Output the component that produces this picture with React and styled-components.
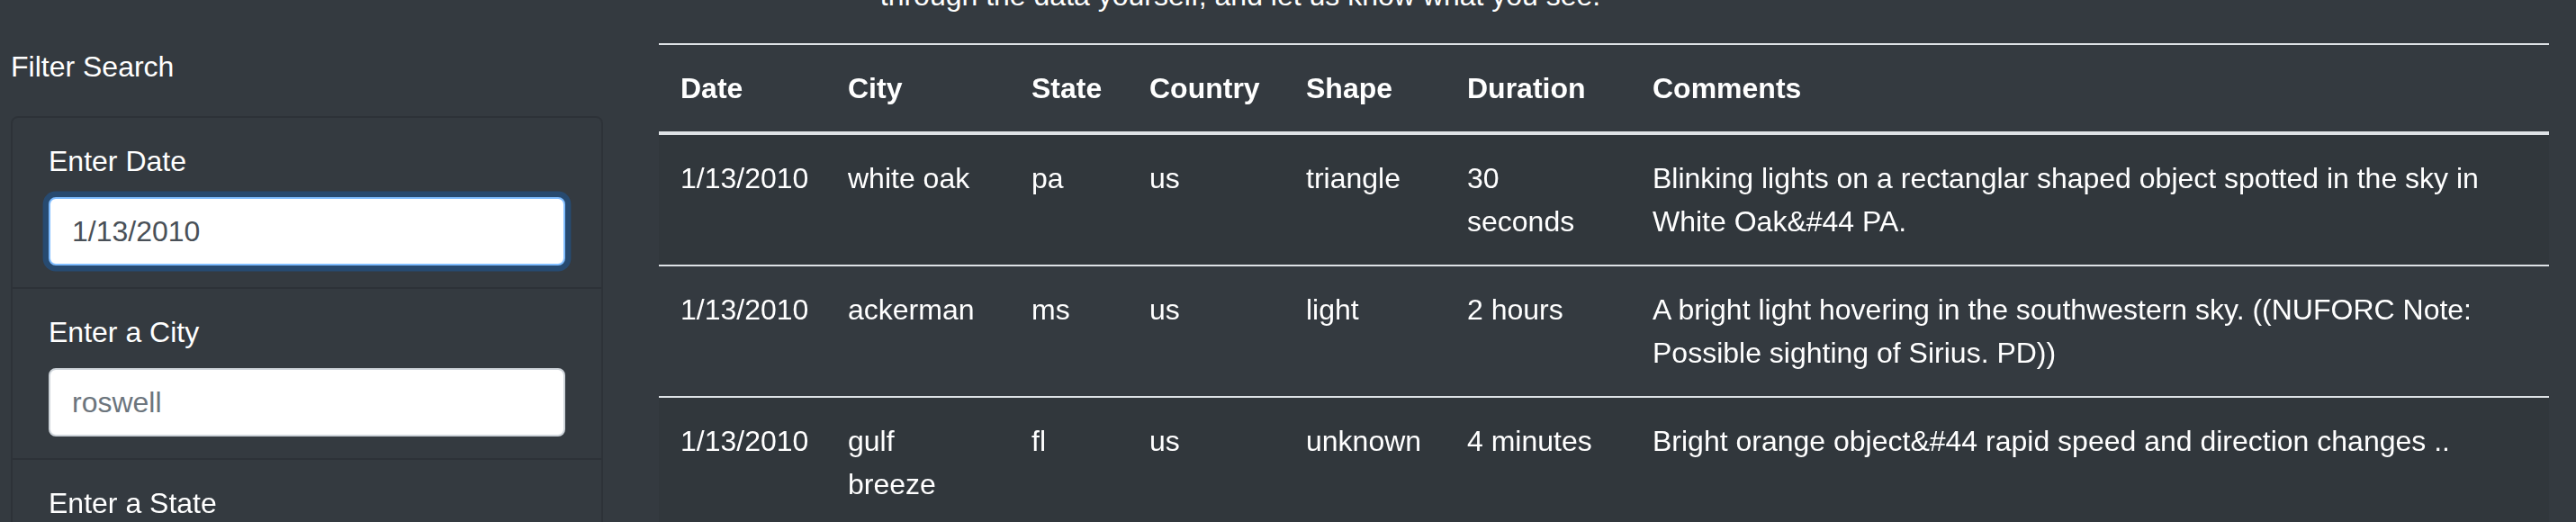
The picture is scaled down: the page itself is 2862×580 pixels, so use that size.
import React, { useEffect, useRef } from 'react';
import styled, { createGlobalStyle } from 'styled-components';

const GlobalStyle = createGlobalStyle`
  * {
    box-sizing: border-box;
  }
  body {
    margin: 0;
    background: #343a40;
    color: #ffffff;
    font-family: "Liberation Sans", Helvetica, Arial, sans-serif;
    font-size: 32px;
    line-height: 1.5;
    overflow: hidden;
  }
`;

const sightings = [
  {
    date: '1/13/2010',
    city: 'white oak',
    state: 'pa',
    country: 'us',
    shape: 'triangle',
    duration: '30 seconds',
    comments: 'Blinking lights on a rectanglar shaped object spotted in the sky in White Oak&#44 PA.',
  },
  {
    date: '1/13/2010',
    city: 'ackerman',
    state: 'ms',
    country: 'us',
    shape: 'light',
    duration: '2 hours',
    comments: 'A bright light hovering in the southwestern sky. ((NUFORC Note: Possible sighting of Sirius. PD))',
  },
  {
    date: '1/13/2010',
    city: 'gulf breeze',
    state: 'fl',
    country: 'us',
    shape: 'unknown',
    duration: '4 minutes',
    comments: 'Bright orange object&#44 rapid speed and direction changes ..',
  },
];

const columns = [
  { key: 'date', label: 'Date', width: 186 },
  { key: 'city', label: 'City', width: 204 },
  { key: 'state', label: 'State', width: 131 },
  { key: 'country', label: 'Country', width: 174 },
  { key: 'shape', label: 'Shape', width: 179 },
  { key: 'duration', label: 'Duration', width: 206 },
  { key: 'comments', label: 'Comments', width: 1020 },
];

const filters = [
  { id: 'datetime', label: 'Enter Date', value: '1/13/2010', focused: true },
  { id: 'city', label: 'Enter a City', placeholder: 'roswell' },
  { id: 'state', label: 'Enter a State', placeholder: 'ca' },
  { id: 'country', label: 'Enter a Country', placeholder: 'us' },
  { id: 'shape', label: 'Enter a Shape', placeholder: 'light' },
];

const App = () => {
  const dateRef = useRef(null);

  useEffect(() => {
    // put the caret at the end of the date, like the user just typed it
    const el = dateRef.current;
    if (el) {
      el.focus();
      el.setSelectionRange(el.value.length, el.value.length);
    }
  }, []);

  return (
    <>
      <GlobalStyle />
      <Intro>through the data yourself, and let us know what you see.</Intro>
      <Row>
        <Sidebar>
          <SidebarTitle>Filter Search</SidebarTitle>
          <FilterList>
            {filters.map((f) => (
              <FilterItem key={f.id}>
                <FilterLabel htmlFor={f.id}>{f.label}</FilterLabel>
                <FilterInput
                  id={f.id}
                  type="text"
                  ref={f.focused ? dateRef : undefined}
                  $focused={f.focused}
                  placeholder={f.placeholder}
                  defaultValue={f.value}
                />
              </FilterItem>
            ))}
          </FilterList>
        </Sidebar>
        <Main>
          <Table>
            <colgroup>
              {columns.map((c) => (
                <col key={c.key} style={{ width: c.width }} />
              ))}
            </colgroup>
            <thead>
              <tr>
                {columns.map((c) => (
                  <Th key={c.key}>{c.label}</Th>
                ))}
              </tr>
            </thead>
            <tbody>
              {sightings.map((s, i) => (
                <Tr key={i}>
                  {columns.map((c) => (
                    <Td key={c.key}>{s[c.key]}</Td>
                  ))}
                </Tr>
              ))}
            </tbody>
          </Table>
        </Main>
      </Row>
    </>
  );
};

export default App;

const Intro = styled.p`
  margin: -29px 0 29px;
  padding-right: 106px;
  text-align: center;
`;

const Row = styled.div`
  display: flex;
  align-items: flex-start;
  padding-left: 12px;
`;

const Sidebar = styled.aside`
  flex: none;
  width: 658px;
  padding-top: 2px;
`;

const SidebarTitle = styled.div`
  margin: 0 0 31px;
`;

const FilterList = styled.ul`
  list-style: none;
  margin: 0;
  padding: 0;
  border: 2px solid rgba(0, 0, 0, 0.125);
  border-radius: 8px;
`;

const FilterItem = styled.li`
  padding: 24px 40px;
  border-bottom: 2px solid rgba(0, 0, 0, 0.125);
  &:last-child {
    border-bottom: none;
  }
`;

const FilterLabel = styled.label`
  display: block;
  margin-bottom: 16px;
`;

const FilterInput = styled.input`
  display: block;
  width: 100%;
  height: 76px;
  padding: 12px 24px;
  font-family: inherit;
  font-size: 32px;
  line-height: 1.5;
  color: #495057;
  caret-color: #212529;
  background: #ffffff;
  border: 2px solid ${(p) => (p.$focused ? '#80bdff' : '#ced4da')};
  border-radius: 8px;
  box-shadow: ${(p) => (p.$focused ? '0 0 0 6.4px rgba(0, 123, 255, 0.25)' : 'none')};
  outline: none;
  &::placeholder {
    color: #6c757d;
  }
`;

const Main = styled.main`
  flex: none;
  width: 2100px;
  margin-left: 62px;
`;

const Table = styled.table`
  width: 100%;
  table-layout: fixed;
  border-collapse: collapse;
  color: #ffffff;
`;

const Th = styled.th`
  padding: 24px;
  text-align: left;
  font-weight: 700;
  vertical-align: bottom;
  border-top: 2px solid #dee2e6;
  border-bottom: 4px solid #dee2e6;
`;

const Tr = styled.tr`
  &:nth-of-type(odd) {
    background: rgba(0, 0, 0, 0.05);
  }
`;

const Td = styled.td`
  padding: 24px;
  vertical-align: top;
  border-top: 2px solid #dee2e6;
`;
